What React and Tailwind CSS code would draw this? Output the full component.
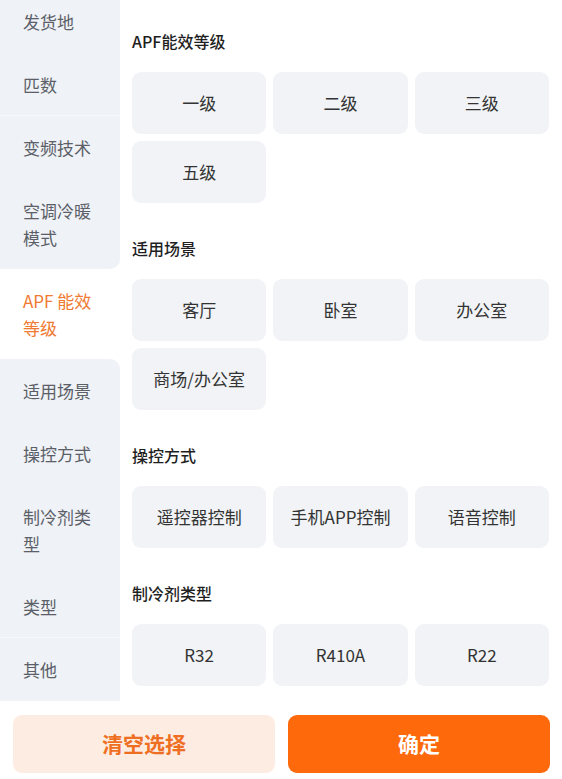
import { useState } from 'react'

const categories = [
  { id: 'origin', label: '发货地' },
  { id: 'hp', label: '匹数', divider: true },
  { id: 'inverter', label: '变频技术' },
  { id: 'mode', label: '空调冷暖模式' },
  { id: 'apf', label: 'APF 能效等级' },
  { id: 'scene', label: '适用场景' },
  { id: 'control', label: '操控方式' },
  { id: 'refrigerant', label: '制冷剂类型' },
  { id: 'type', label: '类型', divider: true },
  { id: 'other', label: '其他' },
]

const sections = [
  { title: 'APF能效等级', options: ['一级', '二级', '三级', '五级'] },
  { title: '适用场景', options: ['客厅', '卧室', '办公室', '商场/办公室'] },
  { title: '操控方式', options: ['遥控器控制', '手机APP控制', '语音控制'] },
  { title: '制冷剂类型', options: ['R32', 'R410A', 'R22'] },
]

export default function App() {
  const [active, setActive] = useState('apf')
  const activeIndex = categories.findIndex(c => c.id === active)

  return (
    <div
      className="h-[779px] w-full flex flex-col overflow-hidden bg-white"
      style={{ fontFamily: '"Noto Sans CJK SC", "Noto Sans", sans-serif' }}
    >
      <div className="flex h-[701px] overflow-hidden">
        {/* sidebar */}
        <div className="w-[120px] shrink-0 bg-white -mt-[10px]">
          {categories.map((cat, i) => {
            const isActive = cat.id === active
            let cls = 'bg-[#eff2f6] text-[#5b6068]'
            if (isActive) cls = 'bg-white text-[#ef7a32]'
            else if (i === activeIndex - 1) cls += ' rounded-br-[10px]'
            else if (i === activeIndex + 1) cls += ' rounded-tr-[10px]'
            return (
              <div
                key={cat.id}
                onClick={() => setActive(cat.id)}
                className={`pl-[23px] pr-[22px] py-[18px] text-[17px] leading-[27px] cursor-pointer ${cls} ${cat.divider ? 'shadow-[inset_0_-1px_0_#f8f9fb]' : ''}`}
              >
                {cat.label}
              </div>
            )
          })}
        </div>

        {/* options */}
        <div className="flex-1 pl-[12px] pr-[13px] pt-[29px]">
          {sections.map(section => (
            <div key={section.title} className="mb-[33px]">
              <h2 className="text-[16px] leading-[24px] font-medium text-[#1f1f1f] mb-[19px]">
                {section.title}
              </h2>
              <div className="grid grid-cols-3 gap-[7px]">
                {section.options.map(opt => (
                  <button
                    key={opt}
                    className="h-[62px] rounded-[9px] bg-[#f1f3f6] text-[17px] text-[#333]"
                  >
                    {opt}
                  </button>
                ))}
              </div>
            </div>
          ))}
        </div>
      </div>

      {/* bottom bar */}
      <div className="flex-1 flex gap-[13px] pl-[13px] pr-[12px] pt-[14px]">
        <button className="flex-1 h-[58px] rounded-[9px] bg-[#fdece2] text-[#ef6f22] text-[21px] font-semibold">
          清空选择
        </button>
        <button className="flex-1 h-[58px] rounded-[9px] bg-[#fe6a0b] text-white text-[21px] font-semibold">
          确定
        </button>
      </div>
    </div>
  )
}
